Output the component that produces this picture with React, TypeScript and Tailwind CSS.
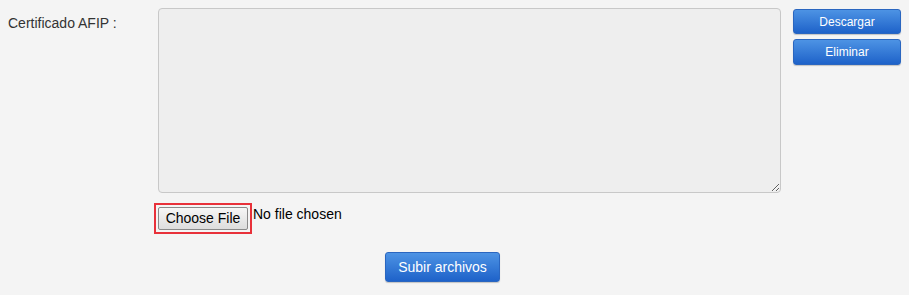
export default function App() {
  const blue =
    "bg-gradient-to-b from-[#4d93e4] to-[#1e62c9] border border-[#2a66c0] rounded-[3px] text-white shadow-[0_1px_1px_rgba(0,0,0,0.2)]";
  return (
    <div className="min-h-[295px] w-[909px] bg-[#f4f4f4] font-['Liberation_Sans',Arial,sans-serif] text-[#333]">
      <div className="flex pt-2">
        <div className="w-[158px] pl-2 pt-[7px] text-[14px] leading-4">Certificado AFIP :</div>
        <div className="flex flex-col">
          <textarea className="h-[185px] w-[623px] rounded-[4px] border border-[#c8c8c8] bg-[#eeeeee] outline-none" readOnly />
          <div className="-ml-1 mt-[10px] flex items-start">
            <div className="border-2 border-[#e8313a] p-[2px]">
              <div className="flex h-[23px] w-[90px] items-center justify-center rounded-[2px] border border-[#8a8a8a] bg-gradient-to-b from-[#f6f6f6] to-[#dddddd] text-[14px] text-black">
                Choose File
              </div>
            </div>
            <span className="ml-px mt-[3px] text-[14px] leading-4 text-black">No file chosen</span>
          </div>
        </div>
        <div className="ml-3 flex flex-col gap-[5px] pt-px">
          <button className={`${blue} h-[25px] w-[108px] text-[12px]`}>Descargar</button>
          <button className={`${blue} h-[26px] w-[108px] text-[12px]`}>Eliminar</button>
        </div>
      </div>
      <div className="ml-[385px] mt-[18px]">
        <button className={`${blue} h-[30px] w-[115px] text-[14px]`}>Subir archivos</button>
      </div>
    </div>
  );
}
